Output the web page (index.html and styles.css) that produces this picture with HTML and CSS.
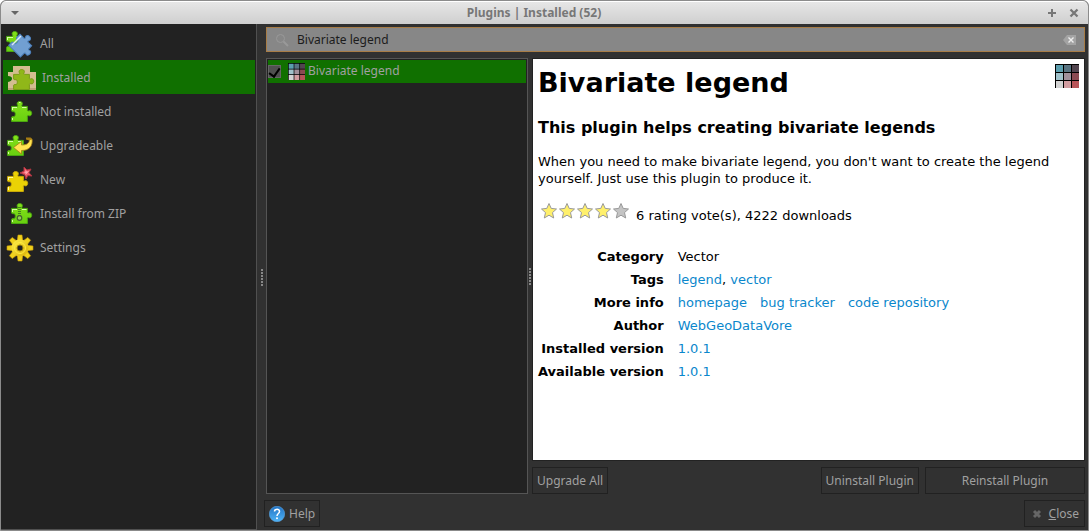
FILE: index.html
```html
<!DOCTYPE html>
<html lang="en">
<head>
<meta charset="utf-8">
<title>Plugins | Installed (52)</title>
<link rel="stylesheet" href="styles.css">
</head>
<body>
<svg class="defs" aria-hidden="true">
  <defs>
    <linearGradient id="green" x1="0" y1="0" x2="0" y2="1"><stop offset="0" stop-color="#84e01a"/><stop offset="1" stop-color="#68d010"/></linearGradient>
    <linearGradient id="gold" x1="0" y1="0" x2="1" y2="1"><stop offset="0" stop-color="#fff04a"/><stop offset="1" stop-color="#dbb008"/></linearGradient>
    <linearGradient id="blue" x1="0" y1="0" x2="0" y2="1"><stop offset="0" stop-color="#2273c4"/><stop offset="1" stop-color="#4fb4f6"/></linearGradient>
    <path id="piece" d="M.6 5.4H6.2Q7.2 5.2 6.6 4.2C5.3 2 6.7.5 8.7.5S12.200 2 10.900 4.200Q10.400 5.200 11.400 5.400H16.400V9.400Q16.600 10.400 17.800 9.900C19.500 9.200 20.700 10.500 20.700 12.300S19.500 15.400 17.800 14.700Q16.600 14.200 16.400 15.300V20.500H.6V16.200Q.9 15.300 2 15.600C4 16 4.300 14.500 4.300 13.100S4 10.300 2 10.700Q.9 10.900.6 10Z"/>
    <path id="star" d="M9 1.500 11.200 6.400 16.500 7 12.500 10.600 13.700 16 9 13.200 4.300 16 5.500 10.600 1.500 7 6.800 6.400Z"/>
    <path id="tooth" d="M11.200 7 12 1H16L16.800 7Z"/>
    <g id="swatches">
      <path fill="#000" d="M0 0H24V24H0Z"/>
      <path fill="#5c9eae" d="M1 1H8V8H1Z"/><path fill="#597381" d="M9 1H16V8H9Z"/><path fill="#52454f" d="M17 1H24V8H17Z"/>
      <path fill="#a0c2cb" d="M1 9H8V16H1Z"/><path fill="#a0909b" d="M9 9H16V16H9Z"/><path fill="#8b4a52" d="M17 9H24V16H17Z"/>
      <path fill="#d3d3d3" d="M1 17H8V24H1Z"/><path fill="#d19ca0" d="M9 17H16V24H9Z"/><path fill="#b85458" d="M17 17H24V24H17Z"/>
    </g>
  </defs>
</svg>
<div class="window">
  <header class="titlebar">
    <button class="title-btn" aria-label="Window menu"><svg width="10" height="6" viewBox="0 0 10 6"><path d="M1 1H9L5 5Z" fill="#666"/></svg></button>
    <h1 class="title">Plugins | Installed (52)</h1>
    <div class="title-actions">
      <button class="title-btn" aria-label="Maximize"><svg width="8" height="8" viewBox="0 0 8 8"><path d="M3 0H5V3H8V5H5V8H3V5H0V3H3Z" fill="#777"/></svg></button>
      <button class="title-btn" aria-label="Close window"><svg width="10" height="10" viewBox="0 0 10 10"><path d="M1.500 1.500 8.500 8.500M8.500 1.500 1.500 8.500" stroke="#777" stroke-width="2.300"/></svg></button>
    </div>
  </header>
  <div class="body">
    <nav class="sidebar">
      <a class="nav-item" href="#all"><svg class="nav-icon" viewBox="0 0 28 28"><use href="#piece" transform="translate(0 1)" fill="url(#green)" stroke="#4aa510"/><path d="M1.500 7.500H7M1.500 7V10" stroke="#d7ffa4" fill="none"/><g transform="translate(16 16) rotate(45) scale(1.050) translate(-10 -12)"><use href="#piece" fill="#719fd2" stroke="#4c7fbb"/></g><path d="M6 15 15 6" stroke="#dbe8f8" stroke-width="1.500"/></svg>All</a>
      <a class="nav-item selected" href="#installed" aria-current="page"><svg class="nav-icon" viewBox="0 0 28 28"><path d="M0 8H5V2H22V8H28V26H0V18Q4 17 4 14.500T0 12Z" fill="#d3bd90"/><path d="M0 25H28" stroke="#bca174" stroke-width="2"/><use href="#piece" transform="translate(5 5)" fill="#90b719" stroke="#7a9c18"/></svg>Installed</a>
      <a class="nav-item" href="#not-installed"><svg class="nav-icon" viewBox="0 0 28 28"><use href="#piece" transform="translate(5 3)" fill="url(#green)" stroke="#4aa510"/><path d="M6 9.500H11M6.500 9V12M16 9.500H20.500M13 4.500H14.500M6.500 20V22" stroke="#d7ffa4" fill="none"/></svg>Not installed</a>
      <a class="nav-item" href="#upgradeable"><svg class="nav-icon" viewBox="0 0 28 28"><use href="#piece" transform="translate(1 3)" fill="url(#green)" stroke="#4aa510"/><path d="M2 9.500H7M2.500 9V12M12 9.500H15M2.500 20V22" stroke="#d7ffa4"/><path d="M20 5.500H24.500Q26.500 6 26 9L23.500 8.500Q21.500 8 20 7.500Z" fill="#a67c12"/><path d="M26 7C27 13 24 18.500 15.500 18.500V22L7.500 15.500 15.500 9.500V13C20 13 23 12 23.500 8Z" fill="#ffe452" stroke="#a77d13" stroke-width=".8"/></svg>Upgradeable</a>
      <a class="nav-item" href="#new"><svg class="nav-icon" viewBox="0 0 28 28"><use href="#piece" transform="translate(1 5)" fill="#ead205" stroke="#c9a808"/><path d="M2 11.500H7M2.500 11V14M2.500 21V24" stroke="#fff8a1"/><path d="m18 1 3 3 4-1-2 3.700 3 3.300-4.200-.4L20 13l-1.300-4.300L14 7l4-2Z" fill="#ec5967" stroke="#ad3440"/><path d="m19 4 2 1.500 2-.5-1.500 2-2 2V7l-2-.5 2-.5Z" fill="#ffa4ac"/></svg>New</a>
      <a class="nav-item" href="#install-zip"><svg class="nav-icon" viewBox="0 0 28 28"><use href="#piece" transform="translate(5 3)" fill="url(#green)" stroke="#4aa510"/><path d="M6 9.500H11M6.500 9V12M16 9.500H20.500M6.500 20V22" stroke="#d7ffa4"/><path d="M13.500 7V16" stroke="#447d20" stroke-width="3" stroke-dasharray="1 1"/><circle cx="13.500" cy="18" r="2.300" fill="#91cf53" stroke="#45672d" stroke-width="1.200"/></svg>Install from ZIP</a>
      <a class="nav-item" href="#settings"><svg class="nav-icon" viewBox="0 0 28 28"><g fill="#f0d21c" stroke="#c99b08" stroke-width=".6"><use href="#tooth"/><use href="#tooth" transform="rotate(45 14 14)"/><use href="#tooth" transform="rotate(90 14 14)"/><use href="#tooth" transform="rotate(135 14 14)"/><use href="#tooth" transform="rotate(180 14 14)"/><use href="#tooth" transform="rotate(225 14 14)"/><use href="#tooth" transform="rotate(270 14 14)"/><use href="#tooth" transform="rotate(315 14 14)"/></g><circle cx="14" cy="14" r="8.500" fill="url(#gold)"/><circle cx="14" cy="14" r="5.500" fill="none" stroke="#ffec3c"/><circle cx="14" cy="14" r="3" fill="#222" stroke="#9d8107"/></svg>Settings</a>
    </nav>
    <div class="splitter"><i class="grip"></i></div>
    <main class="main">
      <div class="search">
        <svg width="14" height="14" viewBox="0 0 14 14" fill="none" stroke="#999"><circle cx="5.500" cy="5.500" r="4"/><path d="M8.500 8.500 13 13" stroke-width="2"/></svg>
        <input class="search-input" type="text" value="Bivariate legend" aria-label="Search plugins">
        <button class="clear" aria-label="Clear search"><svg width="13" height="10" viewBox="0 0 13 10"><path d="M0 5 4 0H13V10H4Z" fill="#a3a3a3"/><path d="M5.500 2.500 10.500 7.500M10.500 2.500 5.500 7.500" stroke="#eee" stroke-width="1.400"/></svg></button>
      </div>
      <div class="panes">
        <div class="list">
          <label class="plugin"><input class="check" type="checkbox" checked><svg width="17" height="17" viewBox="0 0 24 24"><use href="#swatches"/></svg><span>Bivariate legend</span></label>
        </div>
        <div class="splitter narrow"><i class="grip"></i></div>
        <section class="detail">
          <article class="doc">
            <div class="doc-head">
              <h2 class="doc-title">Bivariate legend</h2>
              <svg width="24" height="24" viewBox="0 0 24 24"><use href="#swatches"/></svg>
            </div>
            <h3 class="doc-sub">This plugin helps creating bivariate legends</h3>
            <p class="doc-text">When you need to make bivariate legend, you don't want to create the legend yourself. Just use this plugin to produce it.</p>
            <div class="rating">
              <svg width="90" height="18" viewBox="0 0 90 18" fill="#fff06c" stroke="#999" role="img" aria-label="4 of 5 stars"><use href="#star"/><use href="#star" x="18"/><use href="#star" x="36"/><use href="#star" x="54"/><use href="#star" x="72" fill="#c4c4c4"/></svg>
              <span class="votes">6 rating vote(s), 4222 downloads</span>
            </div>
            <table class="meta">
              <tbody>
              <tr><th scope="row">Category</th><td>Vector</td></tr>
              <tr><th scope="row">Tags</th><td><a href="#legend">legend</a>, <a href="#vector">vector</a></td></tr>
              <tr><th scope="row">More info</th><td><div class="links"><a href="#homepage">homepage</a><a href="#tracker">bug tracker</a><a href="#code">code repository</a></div></td></tr>
              <tr><th scope="row">Author</th><td><a href="#author">WebGeoDataVore</a></td></tr>
              <tr><th scope="row">Installed version</th><td><a href="#v">1.0.1</a></td></tr>
              <tr><th scope="row">Available version</th><td><a href="#v">1.0.1</a></td></tr>
              </tbody>
            </table>
          </article>
          <div class="actions">
            <button class="btn upgrade">Upgrade All</button>
            <button class="btn">Uninstall Plugin</button>
            <button class="btn wide">Reinstall Plugin</button>
          </div>
        </section>
      </div>
      <footer class="footer">
        <button class="btn help"><svg width="16" height="16" viewBox="0 0 16 16"><circle cx="8" cy="8" r="7.700" fill="url(#blue)" stroke="#5ba3df" stroke-width=".6"/><path d="M5.500 5.500C5.500 2.500 10.700 2.500 10.500 5.500 10.500 7.500 8 7.500 8 10" fill="none" stroke="#fff" stroke-width="1.500"/><circle cx="8" cy="12.300" r="1" fill="#fff"/></svg>Help</button>
        <button class="btn close"><svg width="10" height="10" viewBox="0 0 10 10"><path d="M2 2 8 8M8 2 2 8" stroke="#666" stroke-width="3"/></svg><span><u>C</u>lose</span></button>
      </footer>
    </main>
  </div>
</div>
</body>
</html>
```
FILE: styles.css
```css
* { box-sizing: border-box; }
body { margin: 0; background: #fff; font: 12px/16px "Noto Sans", sans-serif; color: #a0a0a0; }
button, input { font: inherit; color: inherit; }
svg { display: block; flex: none; }
.defs { position: absolute; width: 0; height: 0; }
.window { display: flex; flex-direction: column; height: 100vh; border: 1px solid #8b8b8b; border-radius: 6px 6px 0 0; background: #313131; overflow: hidden; }
.titlebar { display: flex; align-items: center; height: 23px; padding: 0 8px; flex: none; background: linear-gradient(#e6e6e6, #cfcfcf); border-top: 1px solid #fff; }
.title { flex: 1; margin: 0; text-align: center; font-size: 12px; line-height: 16px; font-weight: 700; color: #777; }
.title-btn { display: flex; padding: 0 1px; border: 0; background: none; }
.title-actions { display: flex; align-items: center; gap: 11px; }
.body { display: flex; flex: 1; min-height: 0; }
.sidebar { width: 256px; flex: none; padding: 2px 1px; background: #222; border: solid #505050; border-width: 0 1px 1px 0; }
.nav-item { display: flex; align-items: center; gap: 6px; height: 34px; padding: 1px 0 0 4px; color: inherit; text-decoration: none; }
.nav-item.selected { padding-left: 5px; margin-left: 1px; background: #107000; }
.nav-icon { width: 28px; height: 28px; }
.splitter { display: flex; align-items: center; justify-content: center; width: 9px; flex: none; }
.splitter.narrow { width: 4px; }
.grip { width: 2px; height: 17px; background: repeating-linear-gradient(#888 0 2px, transparent 2px 3px); }
.main { display: flex; flex-direction: column; flex: 1; min-width: 0; padding: 3px 3px 3px 0; }
.search { display: flex; align-items: center; gap: 6px; height: 25px; flex: none; padding: 0 8px; border: 1px solid #a87d47; background: #878787; }
.search-input { flex: 1; min-width: 0; border: 0; outline: 0; background: none; padding: 0 2px; color: #1c1c1c; }
.clear { padding: 0; border: 0; background: none; }
.panes { display: flex; flex: 1; min-height: 0; padding: 6px 0; }
.list { width: 262px; flex: none; padding: 1px; border: 1px solid #555; background: #222; }
.plugin { display: flex; align-items: center; height: 23px; background: #107000; }
.plugin svg { margin: 0 3px 0 7px; }
.plugin span { padding-bottom: 1px; }
.check { appearance: none; display: grid; place-items: center; width: 13px; height: 13px; margin: 0; border: 1px solid #666; background: #505050; }
.check:checked::after { content: ""; width: 5px; height: 9px; border: solid #000; border-width: 0 2px 2px 0; rotate: 35deg; }
.detail { display: flex; flex-direction: column; flex: 1; min-width: 0; gap: 6px; }
.doc { flex: 1; min-height: 0; overflow: auto; padding: 5px; border: 1px solid #222; background: #fff; color: #000; font: 13px/17px "DejaVu Sans", sans-serif; }
.doc-head { display: flex; justify-content: space-between; align-items: flex-start; }
.doc-title { margin: 0; font-size: 27px; line-height: 38px; }
.doc-sub { margin: 17px 0 16px; font-size: 16px; line-height: 18px; }
.doc-text { margin: 0; }
.rating { display: flex; align-items: flex-start; gap: 6px; margin: 15px 0 21px; padding-left: 2px; }
.votes { padding-top: 5px; }
.meta { border-spacing: 0; }
.meta th { padding: 3px 14px 3px 0; text-align: right; }
.meta td { padding: 3px 0; }
.meta a { color: #0a87cc; text-decoration: none; }
.links { display: flex; gap: 13px; }
.actions { display: flex; gap: 6px; }
.btn { display: flex; align-items: center; justify-content: center; gap: 4px; height: 27px; padding: 0 4px; border: 1px solid #212121; background: #313131; }
.upgrade { margin-right: auto; }
.wide { width: 160px; }
.footer { display: flex; justify-content: space-between; }
.help { margin-left: -2px; }
.close { gap: 7px; padding: 0 5px 0 7px; }
```
